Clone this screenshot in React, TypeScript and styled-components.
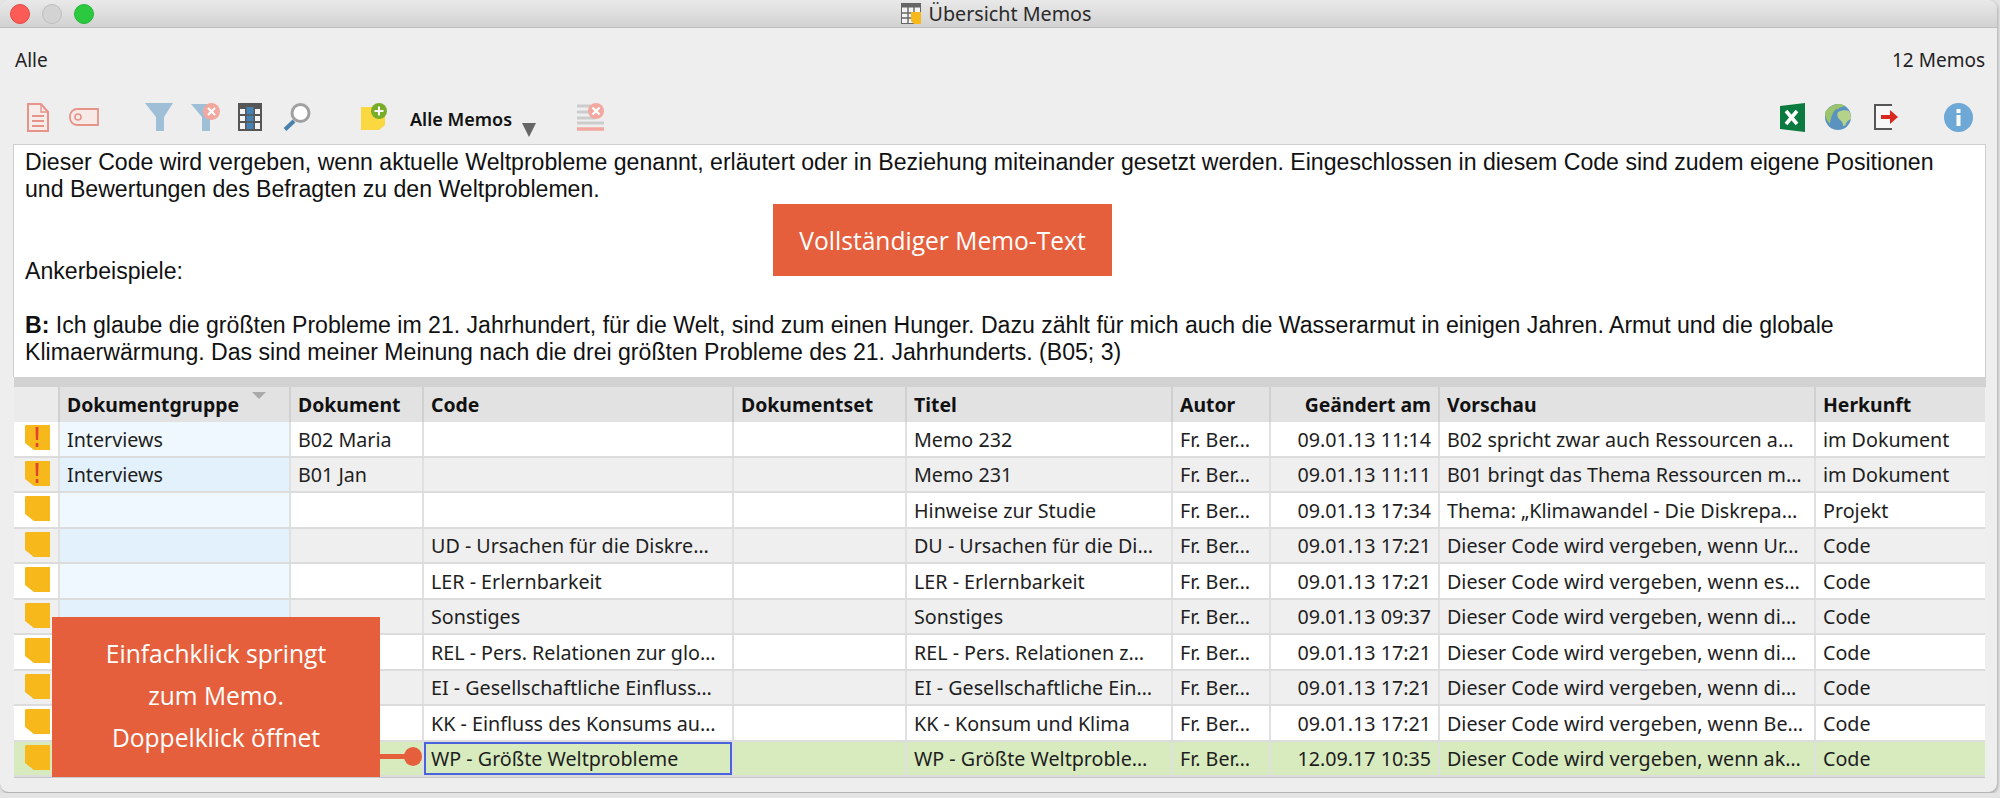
import React from 'react';
import styled, { createGlobalStyle } from 'styled-components';

const GlobalStyle = createGlobalStyle`
  html, body {
    margin: 0;
    padding: 0;
    background: #e4e4e4;
  }
`;

const Window = styled.div`
  position: relative;
  display: flex;
  flex-direction: column;
  box-sizing: border-box;
  width: 1997px;
  height: 793px;
  overflow: hidden;
  background: #eeeeee;
  border-radius: 9px;
  border-bottom: 1px solid #b4b4b4;
  box-shadow: 1px 1px 3px rgba(0, 0, 0, 0.25);
  font-family: 'Noto Sans', sans-serif;
  color: #1c1c1c;
`;

const TitleBar = styled.div`
  position: relative;
  display: flex;
  align-items: center;
  justify-content: center;
  flex: none;
  gap: 8px;
  box-sizing: border-box;
  height: 28px;
  padding-right: 5px;
  background: linear-gradient(#e9e9e9, #d2d2d2);
  border-bottom: 1px solid #bdbdbd;
  font-size: 19.7px;
  color: #2a2a2a;
`;

const Traffic = styled.div`
  position: absolute;
  left: 10px;
  top: 4px;
  display: flex;
  gap: 12px;
`;

const Light = styled.span<{ $color: string; $edge: string }>`
  box-sizing: border-box;
  width: 20px;
  height: 20px;
  border-radius: 50%;
  background: ${({ $color }) => $color};
  border: 1px solid ${({ $edge }) => $edge};
`;

const InfoRow = styled.div`
  display: flex;
  align-items: center;
  justify-content: space-between;
  flex: none;
  height: 64px;
  padding: 0 12px 0 15px;
  box-sizing: border-box;
  font-size: 19px;
  color: #222;
`;

const Toolbar = styled.div`
  display: flex;
  align-items: center;
  flex: none;
  height: 52px;
  padding: 0 24px 2px 27px;
  box-sizing: border-box;
`;

const Tool = styled.span<{ $ml?: number }>`
  display: inline-flex;
  flex: none;
  margin-left: ${({ $ml }) => $ml ?? 0}px;

  & svg {
    display: block;
  }
`;

const ToolSpacer = styled.span`
  flex: 1;
`;

const FilterName = styled.span`
  flex: none;
  margin-left: 23px;
  padding-top: 3px;
  font-size: 18px;
  font-weight: 600;
  color: #111;
`;

const DropArrow = styled.span`
  flex: none;
  margin: 26px 0 0 10px;
  width: 0;
  height: 0;
  border-left: 7px solid transparent;
  border-right: 7px solid transparent;
  border-top: 14px solid #666;
`;

const MemoPanel = styled.div`
  flex: none;
  box-sizing: border-box;
  height: 233px;
  margin: 0 11px 0 13px;
  padding: 4px 11px 0;
  background: #fff;
  border: 1px solid #cfcfcf;
  border-bottom: none;
  font-family: 'Liberation Sans', Arial, sans-serif;
  font-size: 23.1px;
  line-height: 27.2px;
  color: #111;
`;

const MemoLine = styled.div<{ $gap?: number }>`
  white-space: nowrap;
  margin-top: ${({ $gap }) => ($gap ?? 0) * 27.2}px;
`;

const Splitter = styled.div`
  flex: none;
  height: 10px;
  margin: 0 11px 0 14px;
  background: #d2d2d2;
`;

const Table = styled.div`
  flex: none;
  margin-left: 14px;
  width: 1971px;
  border-bottom: 1px solid #c8c8c8;
`;

const columns = '44px 231px 133px 310px 173px 266px 98px 169px 376px 171px';

const HeaderRow = styled.div`
  display: grid;
  grid-template-columns: ${columns};
  height: 35px;
  background: #e2e2e2;
  font-size: 19.4px;
  font-weight: 700;
  color: #111;
`;

const HeaderCell = styled.div<{ $right?: boolean; $first?: boolean }>`
  position: relative;
  box-sizing: border-box;
  display: flex;
  align-items: center;
  justify-content: ${({ $right }) => ($right ? 'flex-end' : 'flex-start')};
  padding: 0 7px;
  white-space: nowrap;
  background: ${({ $first }) => ($first ? '#ebebeb' : 'transparent')};
  border-left: ${({ $first }) => ($first ? 'none' : '2px solid #d0d0d0')};
`;

const SortMark = styled.span`
  position: absolute;
  top: 5px;
  right: 23px;
  width: 0;
  height: 0;
  border-left: 7px solid transparent;
  border-right: 7px solid transparent;
  border-top: 7px solid #a9a9a9;
`;

const RowLine = styled.div<{ $tone: 'white' | 'grey' | 'green' }>`
  display: grid;
  grid-template-columns: ${columns};
  box-sizing: border-box;
  height: 35.5px;
  border-bottom: 2px solid #dcdcdc;
  font-size: 19.7px;
  background: ${({ $tone }) =>
    $tone === 'green' ? '#d8ebbf' : $tone === 'grey' ? '#efefef' : '#ffffff'};
`;

const Cell = styled.div<{ $right?: boolean; $selected?: boolean; $group?: string; $first?: boolean }>`
  box-sizing: border-box;
  display: flex;
  align-items: center;
  justify-content: ${({ $right }) => ($right ? 'flex-end' : 'flex-start')};
  min-width: 0;
  padding: 1px 7px 0;
  white-space: nowrap;
  overflow: hidden;
  color: #1e1e1e;
  border-left: ${({ $first }) => ($first ? 'none' : '2px solid #e0e0e0')};
  background: ${({ $group }) => $group ?? 'transparent'};
  box-shadow: ${({ $selected }) => ($selected ? 'inset 0 0 0 2px #4a63dc' : 'none')};
`;

const NoteCell = styled(Cell)`
  padding: 0 0 2px 11px;
`;

const Callout = styled.div`
  position: absolute;
  display: flex;
  flex-direction: column;
  align-items: center;
  justify-content: center;
  background: #e55f3d;
  color: #fff;
  font-family: 'Open Sans', sans-serif;
  font-size: 24.6px;
  font-weight: 500;
`;

const MemoCallout = styled(Callout)`
  left: 773px;
  top: 204px;
  width: 339px;
  height: 72px;
`;

const RowCallout = styled(Callout)`
  left: 52px;
  top: 617px;
  width: 328px;
  height: 160px;
  box-sizing: border-box;
  padding-bottom: 3px;
  line-height: 42px;
`;

const ConnectorLine = styled.span`
  position: absolute;
  left: 100%;
  top: 137px;
  width: 28px;
  height: 5px;
  background: #e55f3d;
`;

const ConnectorDot = styled.span`
  position: absolute;
  left: 352px;
  top: 130px;
  width: 18px;
  height: 19px;
  border-radius: 50%;
  background: #e55f3d;
`;

const TitleIcon = () => (
  <svg width="20" height="21" viewBox="0 0 20 21">
    <rect x="0.5" y="0.5" width="19" height="20" fill="#f4f4f4" stroke="#666" />
    <rect x="0.5" y="0.5" width="19" height="4" fill="#666" />
    <path d="M7 4v17M13 4v17M0 10h20M0 15h20" stroke="#666" strokeWidth="1.4" />
    <path d="M10 9h10v12h-7l-3-3z" fill="#f6b81a" />
  </svg>
);

const DocIcon = () => (
  <svg width="22" height="29" viewBox="0 0 22 29">
    <path d="M1 1h13l7 8v19H1z" fill="#f6ecea" stroke="#e6948a" strokeWidth="2" />
    <path d="M14 1v8h7" fill="none" stroke="#e6948a" strokeWidth="1.4" />
    <path d="M5 13h12M5 18h12M5 23h12" stroke="#e6948a" strokeWidth="1.8" />
  </svg>
);

const TagIcon = () => (
  <svg width="30" height="18" viewBox="0 0 30 18">
    <path d="M29 1v16H8a7 7 0 0 1-7-7V8a7 7 0 0 1 7-7z" fill="#f6e9e6" stroke="#e6948a" strokeWidth="1.8" />
    <circle cx="9" cy="9" r="3" fill="none" stroke="#e6948a" strokeWidth="1.6" />
  </svg>
);

const FunnelIcon = () => (
  <svg width="28" height="28" viewBox="0 0 28 28">
    <path d="M0 0h28L19 14v14h-8V14z" fill="#9fbfd7" />
  </svg>
);

const FunnelOffIcon = () => (
  <svg width="29" height="28" viewBox="0 0 29 28">
    <path d="M0 1h23l-4 13v14h-8V14z" fill="#9fbfd7" />
    <circle cx="20.500" cy="8.500" r="8.500" fill="#f2a79f" />
    <path d="M17 5l7 7M24 5l-7 7" stroke="#fff" strokeWidth="2.200" />
  </svg>
);

const ColumnsIcon = () => (
  <svg width="24" height="28" viewBox="0 0 24 28">
    <rect width="24" height="28" fill="#565656" />
    <rect x="8.500" y="4" width="7" height="22" fill="#4682b4" />
    <path d="M2 6h5v5H2zM17 6h5v5h-5zM2 13h5v5H2zM17 13h5v5h-5zM2 20h5v6H2zM17 20h5v6h-5z" fill="#f4f4f4" />
    <path d="M0 12h24M0 19h24" stroke="#565656" strokeWidth="1.400" />
  </svg>
);

const SearchIcon = () => (
  <svg width="28" height="28" viewBox="0 0 28 28">
    <path d="M11 18L2 26.500" stroke="#4a80ac" strokeWidth="4" />
    <circle cx="17.500" cy="10" r="8.500" fill="#fff" stroke="#a0a0a0" strokeWidth="3" />
  </svg>
);

const NewMemoIcon = () => (
  <svg width="26" height="28" viewBox="0 0 26 28">
    <path d="M0 4h24v18l-6 5H0z" fill="#fbd83f" />
    <circle cx="18" cy="8" r="8" fill="#79ad28" />
    <path d="M18 3.500v9M13.500 8h9" stroke="#fff" strokeWidth="2" />
  </svg>
);

const ClearListIcon = () => (
  <svg width="27" height="28" viewBox="0 0 27 28">
    <path d="M0 3h14M0 9h14M0 15h18M0 20h27" stroke="#cccccc" strokeWidth="3" />
    <path d="M0 26h27" stroke="#f2a79f" strokeWidth="3.500" />
    <circle cx="19" cy="8" r="8" fill="#f2a79f" />
    <path d="M15.500 4.500l7 7M22.500 4.500l-7 7" stroke="#fff" strokeWidth="2.200" />
  </svg>
);

const ExcelIcon = () => (
  <svg width="25" height="29" viewBox="0 0 25 29">
    <path d="M0 3L25 0v29L0 26z" fill="#0a7a3e" />
    <path d="M6 8l11 13M17 8L6 21" stroke="#fff" strokeWidth="3.600" />
  </svg>
);

const GlobeIcon = () => (
  <svg width="26" height="26" viewBox="0 0 26 26">
    <circle cx="13" cy="13" r="13" fill="#5b93c0" />
    <path d="M4 4c3-3 7-4 10-4 3 0 5 1 6 2-3 1-5 1-7 3-3 0-4 2-5 4-1 2-2 4-2 6-1 2-1 4-1 5-3-3-5-7-5-11 0-2 2-4 4-5z" fill="#9cc46c" />
    <path d="M13 8c4-2 8-2 11-1 2 3 2 6 2 8-2 1-4 2-5 5-1 2-3 3-3 1 0-3-2-4-4-6-2-2-2-5-1-7z" fill="#b6d28a" />
  </svg>
);

const ExitIcon = () => (
  <svg width="24" height="26" viewBox="0 0 24 26">
    <path d="M18 1H1v24h17" fill="#f7f7f7" stroke="#555" strokeWidth="2" />
    <path d="M7 11h9V6l8 7-8 7v-5H7z" fill="#d8281f" />
  </svg>
);

const InfoIcon = () => (
  <svg width="29" height="29" viewBox="0 0 29 29">
    <circle cx="14.500" cy="14.500" r="14.500" fill="#6ea8d6" />
    <rect x="12.500" y="6" width="4" height="4" fill="#fff" />
    <rect x="12.500" y="12" width="4" height="11" fill="#fff" />
  </svg>
);

const NoteIcon = ({ alert }: { alert?: boolean }) => (
  <svg width="25" height="25" viewBox="0 0 25 25">
    <path d="M1 0h24v25H9l-9-7V1z" fill="#f6b81a" />
    {alert && <path d="M10.500 2h3l-.4 13h-2.200zM10.700 18h2.600v4h-2.600z" fill="#e0442e" />}
  </svg>
);

type Memo = {
  group: string;
  doc: string;
  code: string;
  title: string;
  changed: string;
  preview: string;
  origin: string;
  alert?: boolean;
};

const memos: Memo[] = [
  { group: 'Interviews', doc: 'B02 Maria', code: '', title: 'Memo 232', changed: '09.01.13 11:14', preview: 'B02 spricht zwar auch Ressourcen a…', origin: 'im Dokument', alert: true },
  { group: 'Interviews', doc: 'B01 Jan', code: '', title: 'Memo 231', changed: '09.01.13 11:11', preview: 'B01 bringt das Thema Ressourcen m…', origin: 'im Dokument', alert: true },
  { group: '', doc: '', code: '', title: 'Hinweise zur Studie', changed: '09.01.13 17:34', preview: 'Thema: „Klimawandel - Die Diskrepa…', origin: 'Projekt' },
  { group: '', doc: '', code: 'UD - Ursachen für die Diskre…', title: 'DU - Ursachen für die Di…', changed: '09.01.13 17:21', preview: 'Dieser Code wird vergeben, wenn Ur…', origin: 'Code' },
  { group: '', doc: '', code: 'LER - Erlernbarkeit', title: 'LER - Erlernbarkeit', changed: '09.01.13 17:21', preview: 'Dieser Code wird vergeben, wenn es…', origin: 'Code' },
  { group: '', doc: '', code: 'Sonstiges', title: 'Sonstiges', changed: '09.01.13 09:37', preview: 'Dieser Code wird vergeben, wenn di…', origin: 'Code' },
  { group: '', doc: '', code: 'REL - Pers. Relationen zur glo…', title: 'REL - Pers. Relationen z…', changed: '09.01.13 17:21', preview: 'Dieser Code wird vergeben, wenn di…', origin: 'Code' },
  { group: '', doc: '', code: 'EI - Gesellschaftliche Einfluss…', title: 'EI - Gesellschaftliche Ein…', changed: '09.01.13 17:21', preview: 'Dieser Code wird vergeben, wenn di…', origin: 'Code' },
  { group: '', doc: '', code: 'KK - Einfluss des Konsums au…', title: 'KK - Konsum und Klima', changed: '09.01.13 17:21', preview: 'Dieser Code wird vergeben, wenn Be…', origin: 'Code' },
  { group: '', doc: '', code: 'WP - Größte Weltprobleme', title: 'WP - Größte Weltproble…', changed: '12.09.17 10:35', preview: 'Dieser Code wird vergeben, wenn ak…', origin: 'Code' },
];

const App = () => (
  <>
    <GlobalStyle />
    <Window>
      <TitleBar>
        <Traffic>
          <Light $color="#fc5b57" $edge="#e5483f" />
          <Light $color="#d3d3d3" $edge="#bdbdbd" />
          <Light $color="#2ac940" $edge="#22b335" />
        </Traffic>
        <TitleIcon />
        Übersicht Memos
      </TitleBar>

      <InfoRow>
        <span>Alle</span>
        <span>12 Memos</span>
      </InfoRow>

      <Toolbar>
        <Tool><DocIcon /></Tool>
        <Tool $ml={20}><TagIcon /></Tool>
        <Tool $ml={46}><FunnelIcon /></Tool>
        <Tool $ml={18}><FunnelOffIcon /></Tool>
        <Tool $ml={18}><ColumnsIcon /></Tool>
        <Tool $ml={21}><SearchIcon /></Tool>
        <Tool $ml={50}><NewMemoIcon /></Tool>
        <FilterName>Alle Memos</FilterName>
        <DropArrow />
        <Tool $ml={41}><ClearListIcon /></Tool>
        <ToolSpacer />
        <Tool><ExcelIcon /></Tool>
        <Tool $ml={20}><GlobeIcon /></Tool>
        <Tool $ml={23}><ExitIcon /></Tool>
        <Tool $ml={46}><InfoIcon /></Tool>
      </Toolbar>

      <MemoPanel>
        <MemoLine>
          Dieser Code wird vergeben, wenn aktuelle Weltprobleme genannt, erläutert oder in Beziehung miteinander gesetzt werden. Eingeschlossen in diesem Code sind zudem eigene Positionen
        </MemoLine>
        <MemoLine>und Bewertungen des Befragten zu den Weltproblemen.</MemoLine>
        <MemoLine $gap={2}>Ankerbeispiele:</MemoLine>
        <MemoLine $gap={1}>
          <b>B:</b> Ich glaube die größten Probleme im 21. Jahrhundert, für die Welt, sind zum einen Hunger. Dazu zählt für mich auch die Wasserarmut in einigen Jahren. Armut und die globale
        </MemoLine>
        <MemoLine>Klimaerwärmung. Das sind meiner Meinung nach die drei größten Probleme des 21. Jahrhunderts. (B05; 3)</MemoLine>
      </MemoPanel>

      <Splitter />

      <Table>
        <HeaderRow>
          <HeaderCell $first />
          <HeaderCell>Dokumentgruppe<SortMark /></HeaderCell>
          <HeaderCell>Dokument</HeaderCell>
          <HeaderCell>Code</HeaderCell>
          <HeaderCell>Dokumentset</HeaderCell>
          <HeaderCell>Titel</HeaderCell>
          <HeaderCell>Autor</HeaderCell>
          <HeaderCell $right>Geändert am</HeaderCell>
          <HeaderCell>Vorschau</HeaderCell>
          <HeaderCell>Herkunft</HeaderCell>
        </HeaderRow>
        {memos.map((memo, i) => {
          const selected = i === memos.length - 1;
          const tone = selected ? 'green' : i % 2 ? 'grey' : 'white';
          return (
            <RowLine key={i} $tone={tone}>
              <NoteCell $first><NoteIcon alert={memo.alert} /></NoteCell>
              <Cell $group={selected ? undefined : i % 2 ? '#e3f1fc' : '#f0f8ff'}>{memo.group}</Cell>
              <Cell>{memo.doc}</Cell>
              <Cell $selected={selected}>{memo.code}</Cell>
              <Cell />
              <Cell>{memo.title}</Cell>
              <Cell>Fr. Ber…</Cell>
              <Cell $right>{memo.changed}</Cell>
              <Cell>{memo.preview}</Cell>
              <Cell>{memo.origin}</Cell>
            </RowLine>
          );
        })}
      </Table>

      <MemoCallout>Vollständiger Memo-Text</MemoCallout>
      <RowCallout>
        <span>Einfachklick springt</span>
        <span>zum Memo.</span>
        <span>Doppelklick öffnet</span>
        <ConnectorLine />
        <ConnectorDot />
      </RowCallout>
    </Window>
  </>
);

export default App;
